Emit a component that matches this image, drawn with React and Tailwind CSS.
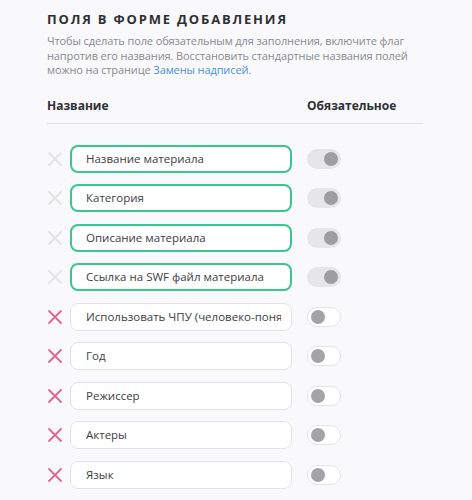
import React from "react";

const fields = [
  { name: "Название материала", locked: true },
  { name: "Категория", locked: true },
  { name: "Описание материала", locked: true },
  { name: "Ссылка на SWF файл материала", locked: true },
  { name: "Использовать ЧПУ (человеко-понятные URL)", locked: false },
  { name: "Год", locked: false },
  { name: "Режиссер", locked: false },
  { name: "Актеры", locked: false },
  { name: "Язык", locked: false },
];

const Cross = ({ active }) => (
  <svg width="16" height="16" viewBox="0 0 16 16" className="shrink-0">
    <path
      d="M2 2 L14 14 M14 2 L2 14"
      stroke={active ? "#e2658f" : "#e3e3e6"}
      strokeWidth="1.8"
      strokeLinecap="round"
    />
  </svg>
);

const Toggle = ({ on }) =>
  on ? (
    <div className="w-[34px] h-[20px] rounded-full bg-[#e6e6e9] flex items-center justify-end pr-[3px]">
      <div className="w-[14px] h-[14px] rounded-full bg-[#9d9da2]" />
    </div>
  ) : (
    <div className="w-[34px] h-[20px] rounded-full bg-white border border-[#e4e4e7] flex items-center pl-[3px]">
      <div className="w-[14px] h-[14px] rounded-full bg-[#a3a3a8]" />
    </div>
  );

export default function App() {
  return (
    <div className="min-h-[500px] bg-[#f9f9fb] font-['Open_Sans',sans-serif] text-[#444]">
      <div className="pl-[47px] pt-[10px] w-[423px]">
        <h2 className="text-[13px] font-bold tracking-[0.14em] text-[#2f2f33] leading-[18px]">
          ПОЛЯ В ФОРМЕ ДОБАВЛЕНИЯ
        </h2>
        <p className="mt-[6px] text-[11px] leading-[14.5px] text-[#8a8a90] tracking-[-0.01em]">
          Чтобы сделать поле обязательным для заполнения, включите флаг
          напротив его названия. Восстановить стандартные названия полей
          можно на странице <a className="text-[#4d8fe0]">Замены надписей</a>.
        </p>
        <div className="mt-[20px] flex text-[12px] font-bold text-[#2f2f33] leading-[16px]">
          <div className="w-[260px]">Название</div>
          <div>Обязательное</div>
        </div>
        <div className="mt-[9px] border-t border-[#e3e3e6]" />
        <div className="mt-[21px] flex flex-col gap-[11.5px]">
          {fields.map((f, i) => (
            <div key={i} className="flex items-center">
              <Cross active={!f.locked} />
              <div
                className={
                  f.locked
                    ? "ml-[7px] w-[222px] h-[28px] rounded-[8px] border-2 border-[#3cc58f] bg-white flex items-center pl-[14px] pr-[10px]"
                    : "ml-[7px] w-[222px] h-[28px] rounded-[8px] border border-[#e3e3e6] bg-white flex items-center pl-[15px] pr-[10px]"
                }
              >
                <span className="text-[11.5px] text-[#3d3d42] whitespace-nowrap overflow-hidden">
                  {f.name}
                </span>
              </div>
              <div className="ml-[15px]">
                <Toggle on={f.locked} />
              </div>
            </div>
          ))}
        </div>
      </div>
    </div>
  );
}
